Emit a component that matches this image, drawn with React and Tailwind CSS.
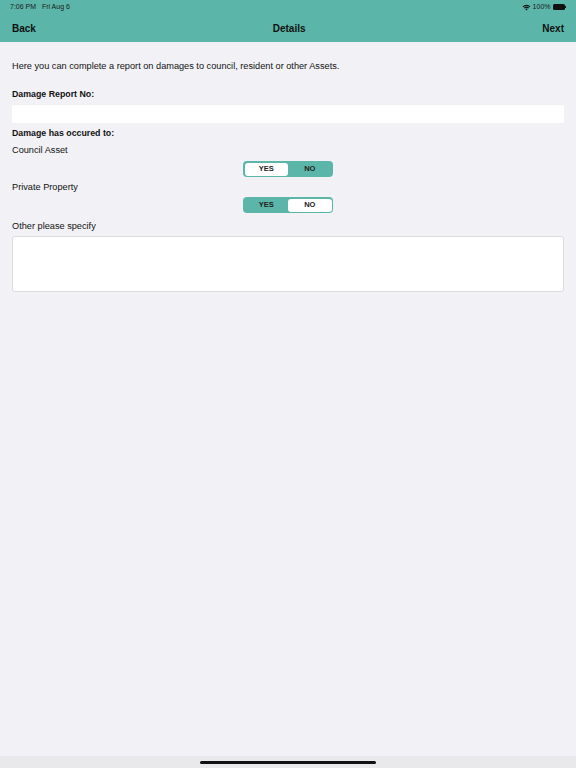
import React from "react";

function Toggle({ yes }) {
  return (
    <div className="flex justify-center">
      <div className="flex w-[90px] h-[16px] rounded-[4px] bg-[#5bb5a8] p-[1.5px]">
        <div className={"flex-1 flex items-center justify-center rounded-[3px] text-[7.5px] font-semibold text-[#222] " + (yes ? "bg-white" : "")}>YES</div>
        <div className={"flex-1 flex items-center justify-center rounded-[3px] text-[7.5px] font-semibold text-[#222] " + (yes ? "" : "bg-white")}>NO</div>
      </div>
    </div>
  );
}

export default function App() {
  return (
    <div className="w-[576px] h-[768px] bg-[#f2f2f6] flex flex-col text-[#111]" style={{ fontFamily: '"Liberation Sans", Arial, sans-serif' }}>
      <div className="bg-[#5bb5a8] h-[42px] flex flex-col shrink-0">
        <div className="h-[13px] flex items-center justify-between px-[10px] text-[7px] text-[#1a1a1a] pt-[1px]">
          <span>7:06 PM&nbsp;&nbsp;&nbsp;Fri Aug 6</span>
          <span className="flex items-center gap-[2px]">
            <svg width="9" height="7" viewBox="0 0 12 9">
              <path d="M6 8.5 L4.3 6.6 A2.5 2.5 0 0 1 7.7 6.6 Z" fill="#111" />
              <path d="M2.6 4.9 A4.9 4.9 0 0 1 9.4 4.9 L8.4 5.9 A3.5 3.5 0 0 0 3.6 5.9 Z" fill="#111" />
              <path d="M0.8 3.1 A7.4 7.4 0 0 1 11.2 3.1 L10.2 4.1 A6 6 0 0 0 1.8 4.1 Z" fill="#111" />
            </svg>
            <span>100%</span>
            <span className="flex items-center">
              <span className="w-[12px] h-[6px] rounded-[1.5px] bg-[#111] inline-block" />
              <span className="w-[1px] h-[2.5px] bg-[#111] inline-block ml-[0.5px]" />
            </span>
          </span>
        </div>
        <div className="flex-1 flex items-center justify-between px-[12px] text-[10px] font-semibold text-[#111] pt-[1px]">
          <span>Back</span>
          <span>Details</span>
          <span>Next</span>
        </div>
      </div>
      <div className="flex-1 flex flex-col px-[12px] text-[9.2px]">
        <div className="mt-[19px] h-[10px] leading-[10px]">Here you can complete a report on damages to council, resident or other Assets.</div>
        <div className="mt-[18px] h-[10px] leading-[10px] font-bold text-[8.8px]">Damage Report No:</div>
        <div className="mt-[6px] h-[18px] bg-white rounded-[2px]" />
        <div className="mt-[5px] h-[10px] leading-[10px] font-bold text-[8.8px]">Damage has occured to:</div>
        <div className="mt-[7px] h-[10px] leading-[10px]">Council Asset</div>
        <div className="mt-[6px]"><Toggle yes={true} /></div>
        <div className="mt-[5px] h-[10px] leading-[10px]">Private Property</div>
        <div className="mt-[5px]"><Toggle yes={false} /></div>
        <div className="mt-[8px] h-[10px] leading-[10px]">Other please specify</div>
        <div className="mt-[5px] h-[56px] bg-white rounded-[3px] border border-[#dcdce0]" />
      </div>
      <div className="h-[12px] bg-[#e9e9ec] flex justify-center shrink-0">
        <div className="mt-[5px] w-[176px] h-[3px] rounded-full bg-[#111]" />
      </div>
    </div>
  );
}
